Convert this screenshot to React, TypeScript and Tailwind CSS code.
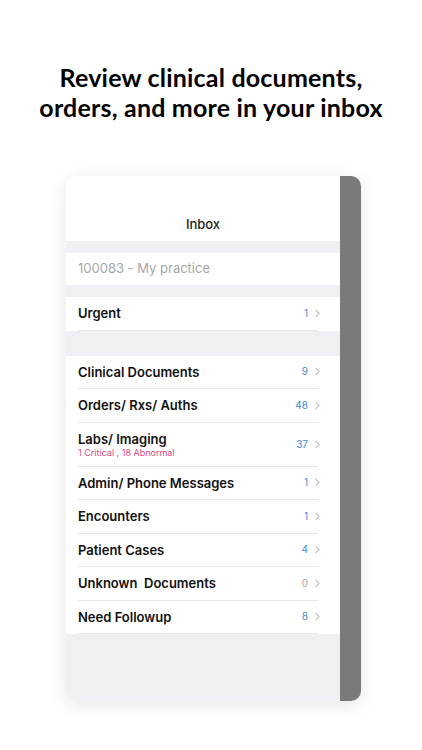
import { ChevronRight } from 'lucide-react';

interface InboxRow {
  label: string;
  count: string;
  sub?: string;
  muted?: boolean;
}

const rows: InboxRow[] = [
  { label: 'Clinical Documents', count: '9' },
  { label: 'Orders/ Rxs/ Auths', count: '48' },
  { label: 'Labs/ Imaging', count: '37', sub: '1 Critical , 18 Abnormal' },
  { label: 'Admin/ Phone Messages', count: '1' },
  { label: 'Encounters', count: '1' },
  { label: 'Patient Cases', count: '4' },
  { label: 'Unknown\u00a0 Documents', count: '0', muted: true },
  { label: 'Need Followup', count: '8' }
];

function Row({ row }: { row: InboxRow }) {
  return (
    <div className="bg-white pl-3">
      <div className={`flex items-center justify-between pr-[16px] ${row.sub ? 'h-[43px]' : 'h-[32.5px]'}`}>
        <div className="flex flex-col">
          <span className="text-[13px] font-semibold leading-[16px] text-[#111]">{row.label}</span>
          {row.sub && <span className="text-[9px] leading-[11px] text-[#e0457b]">{row.sub}</span>}
        </div>
        <div className="flex items-center gap-[3px]">
          <span className={`text-[10px] ${row.muted ? 'text-[#a8a8a8]' : 'text-[#3f8ad8]'}`}>{row.count}</span>
          <ChevronRight className="h-[13px] w-[13px] text-[#c4c4c8]" strokeWidth={2} />
        </div>
      </div>
      <div className="mr-[22px] h-px bg-[#e8e8ec]" />
    </div>
  );
}

export default function App() {
  return (
    <div className="min-h-[750px] w-[422px] bg-white font-['Inter',sans-serif]">
      <h1 className="pt-[62px] text-center font-['Lato',sans-serif] text-[25px] font-bold leading-[30px] tracking-[0.2px] text-black">
        Review clinical documents,
        <br />
        orders, and more in your inbox
      </h1>

      <div className="ml-[66px] mt-[54px] flex h-[525px] w-[295px] overflow-hidden rounded-[10px] shadow-[0_4px_18px_rgba(0,0,0,0.10)]">
        <div className="flex w-[274px] flex-col bg-[#efeff4]">
          <div className="flex h-[65px] items-end justify-center bg-white pb-[7px]">
            <span className="text-[13px] font-medium text-[#222]">Inbox</span>
          </div>
          <div className="mt-[12px] flex h-[32px] items-center bg-white px-3">
            <span className="text-[13px] text-[#a6a6aa]">100083 - My practice</span>
          </div>
          <div className="mt-[12px]">
            <Row row={{ label: 'Urgent', count: '1' }} />
          </div>
          <div className="mt-[25px]">
            {rows.map((row) => (
              <Row key={row.label} row={row} />
            ))}
          </div>
        </div>
        <div className="w-[21px] bg-[#7a7a7c]" />
      </div>
    </div>
  );
}
